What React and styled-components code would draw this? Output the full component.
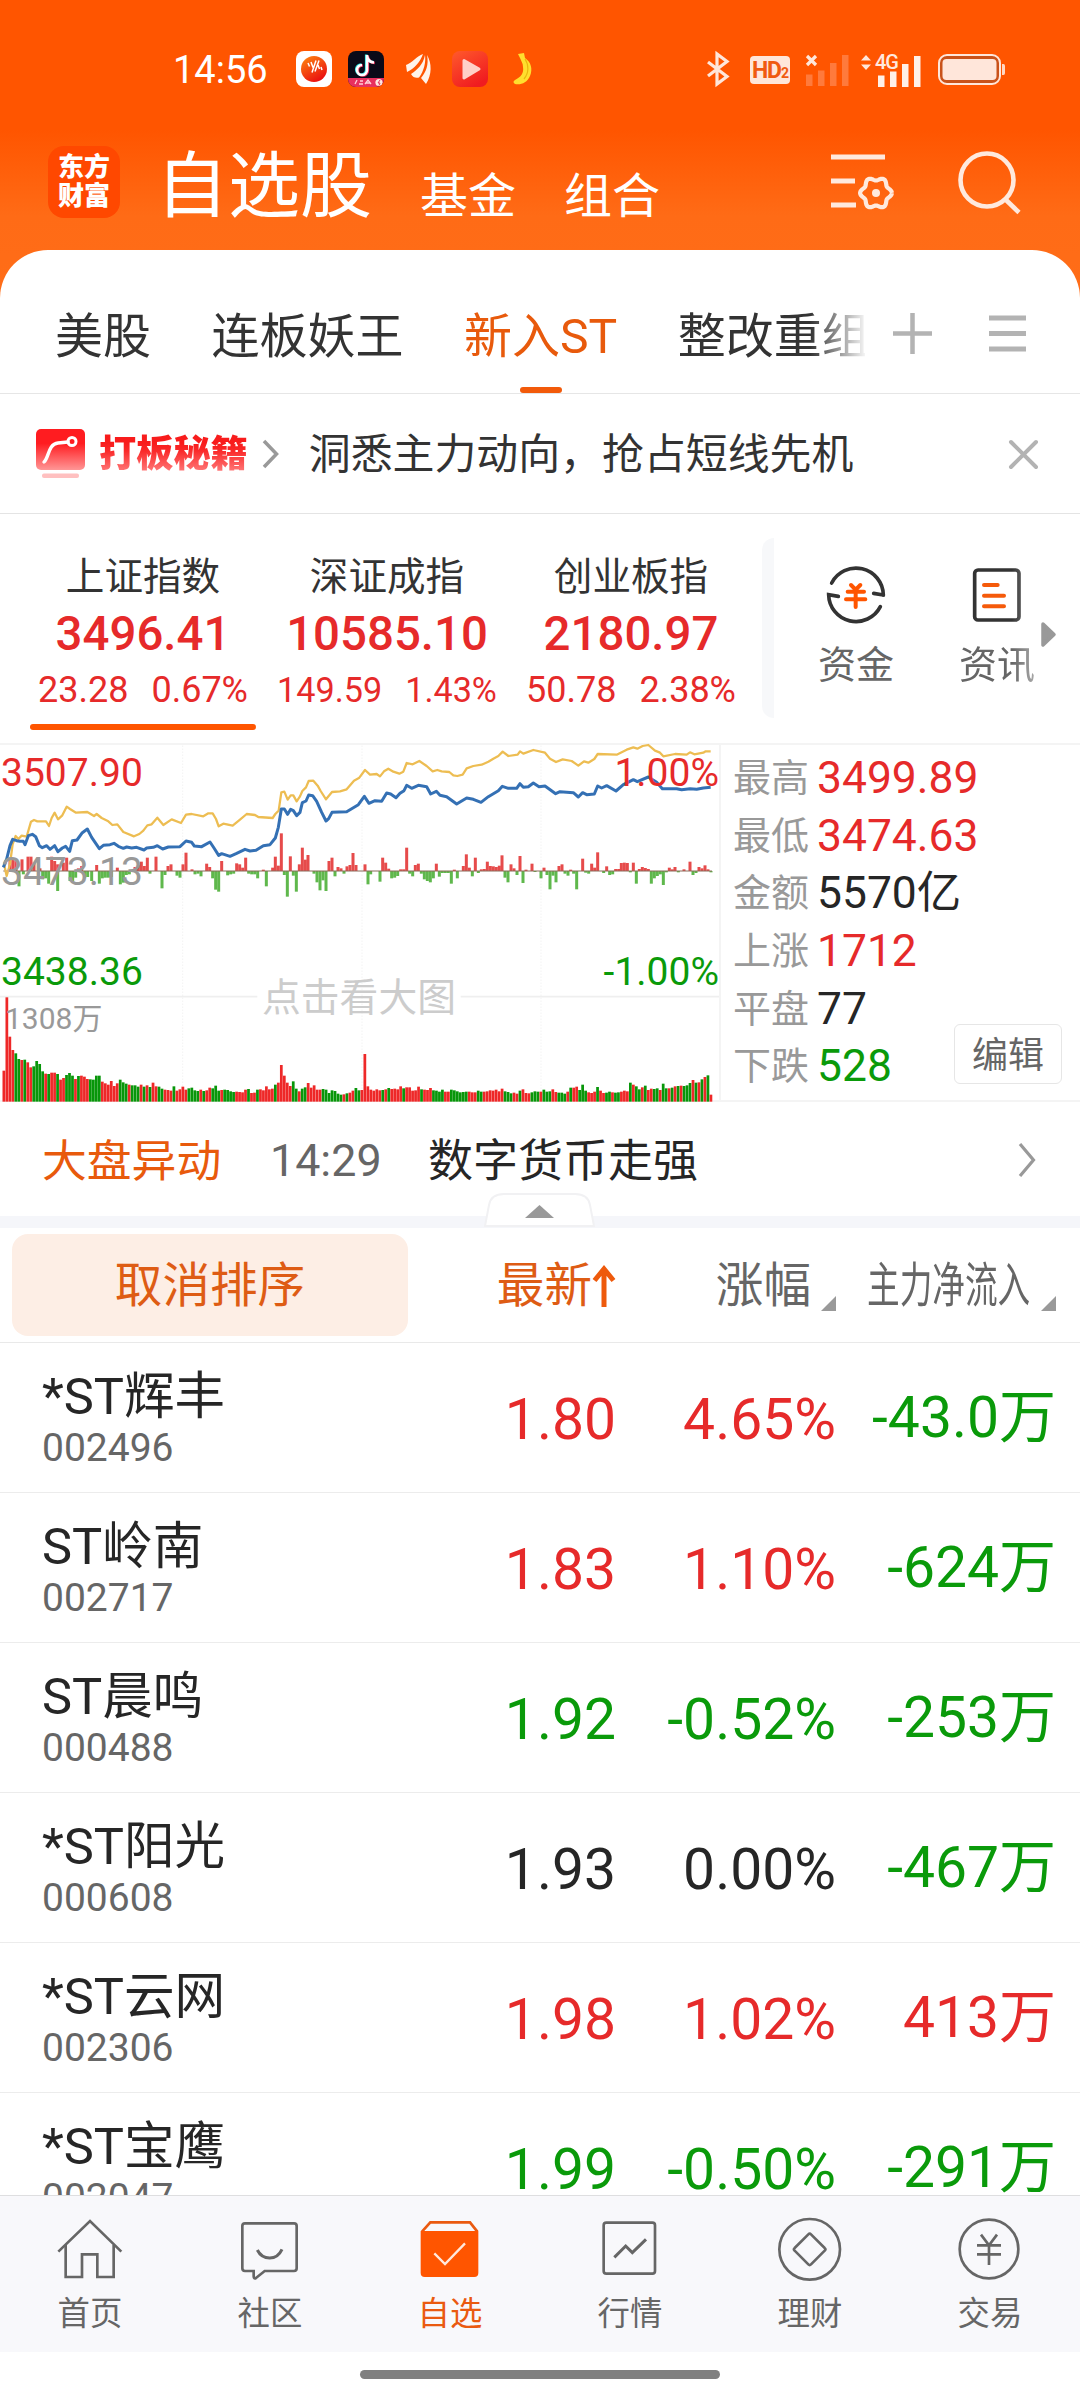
import React from "react";
import styled, { createGlobalStyle } from "styled-components";

const FONT = `Roboto, "Noto Sans CJK SC", sans-serif`;
const C = {
  red: "#e62a2a",
  green: "#0a9a0a",
  ink: "#262626",
  text: "#333",
  sub: "#666",
  mute: "#999",
  accent: "#e85a0c",
  orange: "#ff5500",
};
const TONE = { up: C.red, down: C.green, flat: C.ink };

const Global = createGlobalStyle`
  * { box-sizing: border-box; }
  body { margin: 0; background: #fff; font-family: ${FONT}; }
  svg { display: block; flex: none; overflow: visible; }
`;

const Page = styled.div`
  width: 1080px;
  height: 2400px;
  display: flex;
  flex-direction: column;
  overflow: hidden;
  background: linear-gradient(#ff5500 130px, #ff6b16 216px, #ff6d18 300px);
`;

/* ---------- status bar ---------- */
const StatusBar = styled.div`
  height: 138px;
  display: flex;
  align-items: center;
  justify-content: space-between;
  padding: 0 75px 0 173px;
  color: #fff;
`;
const StatusGroup = styled.div`
  display: flex;
  align-items: center;
  gap: ${(p) => p.$gap}px;
`;
const Clock = styled.span`
  font-size: 38px;
  line-height: 40px;
  width: 107px;
  padding-top: 1px;
`;
const AppTray = styled.div`
  display: grid;
  grid-template-columns: 52px 58px 46px 60px 22px;
  align-items: center;
`;
const HdBadge = styled.span`
  width: 40px;
  height: 28px;
  margin: 2px -1px 0 1px;
  border-radius: 4px;
  background: #ffe6da;
  color: #f05a10;
  display: flex;
  align-items: baseline;
  justify-content: center;
  font-size: 23px;
  line-height: 29px;
  font-weight: 700;
  letter-spacing: -1px;
  small { font-size: 14px; }
`;
const Signal4G = styled.div`
  display: flex;
  position: relative;
  width: 60px;
  height: 32px;
  margin-left: -5px;
  span {
    position: absolute;
    left: 14px;
    top: -1px;
    font-size: 20px;
    line-height: 20px;
    letter-spacing: -1px;
    font-weight: 500;
    color: #ffe9df;
  }
`;

/* ---------- top bar ---------- */
const TopBar = styled.header`
  height: 112px;
  display: flex;
  align-items: center;
  padding: 0 60px 24px 48px;
  color: #fff;
`;
const Logo = styled.div`
  width: 72px;
  height: 72px;
  border-radius: 16px;
  background: #ff4800;
  display: flex;
  flex-direction: column;
  align-items: center;
  justify-content: center;
  font-size: 26px;
  line-height: 29px;
  font-weight: 900;
`;
const Sections = styled.nav`
  display: flex;
  align-items: flex-end;
  gap: 48px;
  margin: 9px 0 0 36px;
  flex: 1;
`;
const Section = styled.span`
  font-size: ${(p) => (p.$active ? 72 : 48)}px;
  line-height: ${(p) => (p.$active ? 84 : 56)}px;
  padding-bottom: ${(p) => (p.$active ? 0 : 4)}px;
`;
const TopActions = styled.div`
  display: flex;
  align-items: center;
  gap: 65px;
`;

/* ---------- sheet and tabs ---------- */
const Sheet = styled.main`
  flex: 1;
  min-height: 0;
  display: flex;
  flex-direction: column;
  background: #fff;
  border-radius: 48px 48px 0 0;
  overflow: hidden;
`;
const TabRow = styled.div`
  height: 144px;
  flex: none;
  display: flex;
  border-bottom: 1px solid #e6e6e6;
`;
const TabStrip = styled.div`
  width: 865px;
  padding-left: 55px;
  display: flex;
  gap: 60.5px;
  overflow: hidden;
  mask-image: linear-gradient(90deg, #000 810px, transparent 868px);
`;
const Tab = styled.div`
  flex: none;
  display: flex;
  flex-direction: column;
  align-items: center;
  justify-content: flex-end;
  font-size: 48px;
  line-height: 60px;
  white-space: nowrap;
  color: ${(p) => (p.$active ? C.accent : C.text)};
  &::after {
    content: "";
    width: 42px;
    height: 6px;
    margin-top: 20px;
    border-radius: 3px;
    background: ${(p) => (p.$active ? "#f25a0a" : "transparent")};
  }
`;
const TabTools = styled.div`
  display: flex;
  gap: 57px;
  padding: 63px 0 0 28px;
`;

/* ---------- promo ---------- */
const Promo = styled.div`
  height: 120px;
  flex: none;
  display: flex;
  align-items: center;
  padding: 0 42px 0 36px;
  border-bottom: 1px solid #e4e4e4;
`;
const PromoBrand = styled.span`
  margin: 0 14px 0 14px;
  font-size: 37.2px;
  line-height: 50px;
  font-weight: 900;
  background: linear-gradient(#f81c1c 14px, #fa2a2a 22px, #ff7d7d 44px);
  background-clip: text;
  color: transparent;
`;
const PromoText = styled.span`
  flex: 1;
  margin: 2px 0 0 30px;
  font-size: 41.9px;
  line-height: 56px;
  color: ${C.text};
`;

/* ---------- indices ---------- */
const IndexStrip = styled.section`
  height: 229px;
  flex: none;
  display: flex;
  padding-left: 30px;
`;
const IndexItem = styled.div`
  width: 226px;
  margin-right: 18px;
  padding-top: 40px;
  display: flex;
  flex-direction: column;
  align-items: center;
  &::after {
    content: "";
    width: 226px;
    height: 6px;
    margin-top: 12px;
    border-radius: 3px;
    background: ${(p) => (p.$active ? C.orange : "transparent")};
  }
`;
const IndexName = styled.span`
  font-size: 38.6px;
  line-height: 46px;
  color: ${C.text};
`;
const IndexValue = styled.span`
  margin-top: 4px;
  font-size: 47.4px;
  line-height: 60px;
  font-weight: 500;
  color: ${C.red};
`;
const IndexChange = styled.span`
  display: flex;
  gap: 23px;
  margin-top: 4px;
  font-size: ${(p) => (p.$tight ? 34.2 : 36)}px;
  line-height: 44px;
  white-space: nowrap;
  color: ${C.red};
`;
const StripDivider = styled.i`
  width: 12px;
  height: 180px;
  margin-top: 24px;
  border-radius: 12px 0 0 12px;
  background: #f7f8fa;
`;
const QuickLinks = styled.div`
  flex: 1;
  display: flex;
  padding: 51px 0 0 37px;
`;
const QuickLink = styled.div`
  width: 90px;
  margin-right: 51px;
  display: flex;
  flex-direction: column;
  align-items: center;
  gap: 15px;
  font-size: 38px;
  line-height: 50px;
  color: ${C.sub};
  mask-image: ${(p) => (p.$fade ? "linear-gradient(90deg, #000 60px, rgba(0,0,0,.45) 88px)" : "none")};
`;
const MoreArrow = styled.div`
  margin: 57px 0 0 -52px;
`;

/* ---------- chart ---------- */
const Market = styled.section`
  height: 359px;
  flex: none;
  display: flex;
  position: relative;
  border-top: 2px solid #f4f4f4;
  border-bottom: 2px solid #f4f4f4;
`;
const ChartBox = styled.div`
  position: relative;
  width: 721px;
  border-right: 2px solid #f4f4f4;
`;
const ChartLabel = styled.span`
  position: absolute;
  top: ${(p) => p.$top}px;
  ${(p) => (p.$right ? "right: 0;" : `left: ${p.$left ?? 1}px;`)}
  font-size: ${(p) => p.$size ?? 39}px;
  line-height: 40px;
  color: ${(p) => p.$color};
`;
const Stats = styled.dl`
  flex: 1;
  margin: 0;
  padding: 5px 0 0 12px;
`;
const Stat = styled.div`
  height: 57.6px;
  display: flex;
  align-items: center;
  gap: 8px;
  dt { font-size: 38px; line-height: 57px; color: ${C.mute}; }
  dd { margin: 0; font-size: 44.4px; line-height: 57px; color: ${(p) => TONE[p.$tone]}; }
`;
const EditButton = styled.button`
  position: absolute;
  right: 18px;
  top: 279px;
  width: 108px;
  height: 60px;
  padding: 4px 0 0;
  border: 1px solid #e6e6e6;
  border-radius: 6px;
  background: #fff;
  font: 36px/54px ${FONT};
  color: ${C.sub};
`;

/* ---------- movers ---------- */
const Movers = styled.section`
  height: 126px;
  flex: none;
  position: relative;
  display: flex;
  align-items: center;
  padding: 3px 43px 0 42px;
  border-bottom: 12px solid #f5f6fa;
  font-size: 44.8px;
  line-height: 60px;
`;
const MoversTitle = styled.span`
  width: 228px;
  padding-top: 2px;
  color: ${C.accent};
`;
const MoversTime = styled.span`
  width: 158px;
  color: ${C.sub};
`;
const MoversText = styled.span`
  flex: 1;
  padding-top: 2px;
  font-size: 45px;
  color: ${C.ink};
`;
const Handle = styled.div`
  position: absolute;
  left: 484px;
  top: 91px;
`;

/* ---------- table ---------- */
const TableHead = styled.div`
  height: 115px;
  flex: none;
  display: grid;
  grid-template-columns: 396px 207px 221px 220px;
  padding-left: 12px;
  align-items: center;
  border-bottom: 1px solid #e9e9e9;
  font-size: 47.6px;
  line-height: 60px;
`;
const ClearSort = styled.div`
  height: 102px;
  padding-top: 1px;
  border-radius: 16px;
  background: #fdeee5;
  color: #de5c14;
  text-align: center;
  line-height: 102px;
`;
const HeadCell = styled.div`
  display: flex;
  justify-content: flex-end;
  align-items: center;
  padding-top: 1px;
  gap: ${(p) => (p.$sorted ? 1 : 10)}px;
  white-space: nowrap;
  color: ${(p) => (p.$sorted ? "#de5c14" : C.sub)};
`;
const Narrow = styled.span`
  width: 164px;
  > span {
    display: inline-block;
    transform: scaleX(0.686);
    transform-origin: left;
  }
`;
const SortMark = styled.svg`
  margin-top: 35px;
`;
const List = styled.div`
  flex: 1;
  min-height: 0;
  overflow: hidden;
`;
const Row = styled.div`
  height: 150px;
  display: grid;
  grid-template-columns: 240px 334px 220px 220px;
  padding-left: 42px;
  border-bottom: 1px solid #ececec;
`;
const Stock = styled.div`
  padding-top: 24px;
  display: flex;
  flex-direction: column;
`;
const StockName = styled.span`
  font-size: 50.6px;
  line-height: 60px;
  white-space: nowrap;
  color: ${C.ink};
`;
const StockCode = styled.span`
  margin-top: 1px;
  font-size: 39px;
  line-height: 40px;
  color: ${C.sub};
`;
const Num = styled.span`
  font-size: 57px;
  line-height: 154px;
  text-align: right;
  white-space: nowrap;
  color: ${(p) => TONE[p.$tone]};
`;
const Flow = styled(Num)`
  font-size: 57px;
  line-height: 150px;
`;

/* ---------- bottom nav ---------- */
const BottomNav = styled.nav`
  height: 157px;
  flex: none;
  display: flex;
  background: #f8f8fb;
  border-top: 1px solid #dedee0;
`;
const NavItem = styled.div`
  flex: 1;
  padding-top: 21px;
  display: flex;
  flex-direction: column;
  align-items: center;
  gap: 13px;
  font-size: 32.4px;
  line-height: 40px;
  color: ${(p) => (p.$active ? "#ea5a10" : C.sub)};
`;
const HomeArea = styled.div`
  height: 48px;
  flex: none;
  padding-top: 18px;
  background: #fff;
  &::after {
    content: "";
    display: block;
    width: 360px;
    height: 9px;
    margin: 0 auto;
    border-radius: 5px;
    background: #808080;
  }
`;

/* ---------- chart data ---------- */
const BLUE =
  "10,410 20,385 30,345 38,326 50,330 60,332 70,332 75,342 85,315 97,311 107,318 118,345 127,351 140,345 150,356 164,345 174,363 187,352 197,347 209,362 217,330 231,328 247,306 262,295 275,320 298,354 310,344 330,342 342,338 355,347 370,353 380,349 395,352 410,350 432,358 440,352 460,350 472,345 488,355 505,349 540,348 558,331 575,335 583,346 605,348 630,334 642,352 656,374 665,369 690,377 710,368 735,356 750,361 768,359 790,345 810,342 826,322 835,290 844,235 853,235 863,251 872,236 880,240 890,255 900,245 907,216 918,211 926,193 938,195 950,212 965,245 978,271 986,264 996,245 1040,243 1055,234 1075,222 1093,197 1107,218 1125,210 1145,212 1160,187 1172,190 1188,201 1200,188 1212,180 1220,164 1235,173 1255,164 1280,168 1292,190 1309,182 1320,194 1340,198 1370,220 1400,202 1420,206 1443,215 1465,198 1495,180 1507,167 1525,173 1550,173 1560,159 1570,170 1585,168 1600,157 1617,168 1635,166 1667,189 1680,183 1720,186 1735,199 1748,186 1760,192 1783,190 1793,166 1805,172 1820,165 1848,181 1870,162 1900,147 1912,153 1945,139 1970,155 1987,174 2030,174 2045,177 2070,174 2090,176 2110,172 2132,170";
const YELLOW =
  "12,400 20,436 30,400 38,340 47,316 55,325 65,315 80,318 93,273 102,268 112,272 138,272 147,286 155,262 164,246 174,266 187,254 200,228 210,235 228,246 262,244 282,256 290,250 305,262 325,272 337,283 352,281 370,304 402,317 418,310 430,300 442,284 455,281 472,261 490,283 515,266 543,277 558,252 575,250 610,257 625,248 638,248 648,265 656,287 670,279 698,285 720,267 740,250 765,253 775,259 818,262 826,250 836,240 844,185 853,183 863,207 872,194 880,194 890,212 900,197 907,181 918,170 926,151 940,150 953,165 962,181 978,206 996,184 1020,182 1040,176 1062,150 1078,141 1095,118 1110,132 1130,130 1140,137 1152,122 1165,114 1180,123 1198,129 1210,123 1220,97 1238,101 1258,91 1280,106 1298,122 1312,118 1325,122 1348,124 1360,134 1372,136 1388,132 1400,113 1420,106 1445,102 1465,93 1480,84 1495,76 1508,63 1525,76 1553,72 1560,62 1570,69 1600,58 1635,66 1650,84 1668,94 1688,86 1715,91 1735,105 1752,92 1765,96 1783,85 1793,70 1850,72 1880,57 1900,50 1912,54 1928,46 1945,43 1965,60 1980,66 1990,77 2025,70 2060,72 2070,65 2083,71 2110,66 2117,62 2132,62";
const RISE =
  "30,40 39,35 48,30 66,35 84,43 93,43 102,25 120,8 155,43 164,30 173,20 190,25 200,40 235,8 245,15 290,18 352,10 405,12 415,18 424,28 433,15 442,40 468,43 504,15 513,20 549,20 558,55 576,5 620,22 629,12 665,30 710,23 719,20 728,10 737,40 790,4 818,10 826,43 835,16 844,113 871,44 898,20 907,70 916,34 924,48 987,30 996,40 1014,12 1023,8 1041,14 1050,18 1059,54 1068,18 1095,20 1148,40 1157,25 1166,7 1202,5 1211,5 1220,70 1246,18 1255,22 1309,22 1363,4 1390,15 1399,50 1408,10 1426,40 1444,5 1453,6 1462,28 1471,15 1480,14 1489,12 1498,16 1506,47 1533,20 1542,8 1560,45 1578,4 1596,22 1632,10 1677,15 1686,20 1712,4 1748,37 1775,22 1784,10 1793,56 1820,14 1847,6 1856,6 1864,24 1873,25 1882,24 1900,25 1918,6 1927,12 1936,9 1945,6 2008,10 2017,5 2025,12 2052,5 2070,28 2097,12 2106,8 2115,17 2124,5";
const FALL =
  "57,46 70,10 128,25 137,22 146,38 173,60 210,30 218,30 227,20 254,20 263,18 275,30 298,38 307,22 316,20 325,20 334,18 361,40 370,35 379,12 388,10 450,8 486,52 495,12 531,14 540,20 585,10 594,8 603,16 638,22 647,56 656,62 683,13 692,10 701,8 746,8 755,10 764,10 773,22 799,46 853,12 862,77 880,14 889,62 942,8 951,34 960,58 969,28 978,60 1005,16 1032,8 1104,40 1112,10 1140,32 1175,22 1184,20 1193,15 1229,8 1238,16 1264,8 1273,25 1282,30 1291,34 1300,22 1318,17 1327,6 1336,6 1345,6 1354,38 1372,22 1417,16 1435,6 1515,20 1524,34 1551,12 1569,36 1605,3 1623,22 1641,12 1650,55 1659,14 1668,34 1695,8 1704,14 1721,8 1730,55 1757,5 1766,8 1811,6 1829,12 1838,10 1891,4 1909,38 1954,38 1963,22 1972,15 1981,10 1990,42 1999,4 2035,4 2079,12 2088,6 2133,4";
const VOLUME = [
  1020, 800, 918, 958, 968, 985, 988, 987, 995, 1010, 1007, 991, 1000, 1022, 1029, 1030, 1026, 1026, 1030, 1047,
  1042, 1033, 1027, 1035, 1045, 1036, 1035, 1038, 1045, 1046, 1047, 1035, 1035, 1053, 1058, 1062, 1051, 1066, 1058, 1047,
  1055, 1059, 1062, 1064, 1064, 1068, 1062, 1068, 1064, 1069, 1056, 1067, 1068, 1074, 1077, 1078, 1080, 1067, 1080, 1076,
  1068, 1077, 1073, 1071, 1079, 1081, 1077, 1081, 1079, 1071, 1073, 1065, 1080, 1078, 1077, 1078, 1082, 1084, 1083, 1084,
  1085, 1077, 1075, 1087, 1086, 1077, 1076, 1079, 1067, 1076, 1074, 1062, 1056, 1003, 1035, 1056, 1066, 1052, 1074, 1082,
  1074, 1070, 1057, 1071, 1064, 1077, 1077, 1075, 1077, 1087, 1079, 1081, 1089, 1092, 1091, 1088, 1086, 1080, 1072, 1079,
  1078, 970, 1067, 1077, 1080, 1076, 1079, 1078, 1076, 1072, 1075, 1074, 1076, 1067, 1073, 1070, 1070, 1080, 1079, 1068,
  1076, 1077, 1078, 1072, 1079, 1080, 1083, 1077, 1083, 1083, 1077, 1079, 1082, 1085, 1084, 1083, 1083, 1085, 1085, 1080,
  1083, 1083, 1082, 1079, 1080, 1077, 1082, 1074, 1082, 1084, 1088, 1086, 1089, 1080, 1076, 1087, 1088, 1085, 1082, 1083,
  1083, 1077, 1083, 1082, 1076, 1084, 1086, 1086, 1089, 1083, 1071, 1071, 1068, 1078, 1062, 1080, 1085, 1087, 1083, 1069,
  1080, 1087, 1086, 1083, 1085, 1086, 1085, 1083, 1080, 1082, 1056, 1062, 1067, 1076, 1070, 1065, 1078, 1074, 1075, 1073,
  1078, 1059, 1073, 1073, 1071, 1067, 1066, 1065, 1066, 1064, 1057, 1048, 1056, 1055, 1046, 1039, 1034, 1092,
];
const VOLUME_SIDE =
  "RRRRGGRGRRGGGGRGRRGRRGGGRGRRRGGGGRRRRRRGGGRGGGRGRGR" +
  "RGGRRRGRRRRGGGGRGRRGGGRGGGGRRRRGRRGRRRRRGRRRRRGGRGG" +
  "RRRRRGGGGGGGRGRRGGRRRRRRRGRGRRRRGRRRRRGRRRGGGGRRGGG" +
  "GGGRRRGGRRRRRRRGGGRRGRRRGGGRGGGRRGGGRGRRGGGRRRGRRGG" +
  "RGGRRRGRGGRGRRGGRGGRGRGRGGGRGRGRGRGR";

const pairs = (s) => s.split(" ").map((p) => p.split(",").map(Number));

function IndexChart() {
  return (
    <svg width="719" height="359" viewBox="0 43 2157 1077" preserveAspectRatio="none">
      <g stroke="#ededed" strokeWidth="3" strokeDasharray="3 6">
        <path d="M548 45V1113M1086 45V1113M1623 45V1113" />
      </g>
      <path d="M0 798H772M1382 798H2157" stroke="#efefef" strokeWidth="5" />
      <g fill="#e64b4b">
        {pairs(RISE).map(([x, h]) => (
          <rect key={x} x={x - 4.5} y={421 - h} width="9" height={h} />
        ))}
      </g>
      <g fill="#5fb84c">
        {pairs(FALL).map(([x, h]) => (
          <rect key={x} x={x - 4.5} y={421} width="9" height={h} />
        ))}
      </g>
      <path d="M10 421H2136" stroke="#8a6a5a" strokeWidth="3" />
      <polyline points={YELLOW} fill="none" stroke="#edbd52" strokeWidth="6.8" strokeLinejoin="round" />
      <polyline points={BLUE} fill="none" stroke="#3470b4" strokeWidth="9" strokeLinejoin="round" />
      {VOLUME.map((y, i) => (
        <rect
          key={i}
          x={7.5 + i * 8.95}
          y={y}
          width="8.2"
          height={1113 - y}
          fill={VOLUME_SIDE[i] === "G" ? "#08960a" : "#ee2828"}
        />
      ))}
    </svg>
  );
}

/* ---------- icons ---------- */
const NAV_ICONS = {
  home: (
    <>
      <path d="M-95 8L0 -84L94 8" />
      <path d="M-73 -12V84H-24V16H22V84H71V-12" />
    </>
  ),
  community: (
    <>
      <path d="M-75 -77H72Q80 -77 80 -69V58Q80 66 72 66H-16L-42 87Q-49 91 -49 82V66H-75Q-83 66 -83 58V-69Q-83 -77 -75 -77Z" />
      <path d="M-38 3Q-26 27 -1 27Q24 27 36 1" strokeWidth="9" />
    </>
  ),
  watch: (
    <>
      <path d="M-84 -52L-59 -80H60L82 -52" stroke="#ea5a10" fill="#f8f8fb" />
      <path d="M-88 -54H85V72Q85 84 73 84H-76Q-88 84 -88 72Z" fill="#ff5500" stroke="none" />
      <path d="M-47 13L-15 45L45 -17" stroke="#ffe8dc" strokeWidth="7" />
    </>
  ),
  quotes: (
    <>
      <rect x="-79" y="-79" width="154" height="153" rx="8" />
      <path d="M-47 25L-13 -9L7 11L48 -29" strokeWidth="9" />
    </>
  ),
  wealth: (
    <>
      <circle cx="-1" cy="1" r="91" />
      <path d="M-5 -44Q-1 -48 3 -44L44 -3Q49 1 44 5L3 46Q-1 50 -5 46L-46 5Q-51 1 -46 -3Z" />
    </>
  ),
  trade: (
    <>
      <circle cx="-3" cy="0" r="88" />
      <path d="M-27 -43L-3 -11L21 -43M-39 -11H33M-39 16H33M-3 -11V48" />
    </>
  ),
};

const NavIcon = ({ name }) => (
  <svg width="64" height="64" viewBox="-96 -96 192 192" fill="none" stroke="#666" strokeWidth="8">
    {NAV_ICONS[name]}
  </svg>
);

const gear = Array.from({ length: 73 }, (_, i) => {
  const t = (i * Math.PI) / 36;
  const r = 14.2 + 1.7 * Math.cos(6 * t);
  return `${(45 + r * Math.cos(t)).toFixed(2)},${(39 + r * Math.sin(t)).toFixed(2)}`;
}).join(" ");

const FilterIcon = () => (
  <svg width="62" height="58" viewBox="0 -1 62 58" fill="none" stroke="#ffe9dd" strokeWidth="5">
    <path d="M0 3H54M0 27H24M0 51H25" />
    <polyline points={gear} strokeWidth="4.2" strokeLinejoin="round" />
    <circle cx="45" cy="39" r="4" fill="#ffe9dd" stroke="none" />
  </svg>
);

const SearchIcon = () => (
  <svg width="62" height="62" viewBox="0 0 62 62" fill="none" stroke="#ffe9dd" strokeWidth="4.6">
    <circle cx="29" cy="29" r="26.5" />
    <path d="M47 48L61 61.5" />
  </svg>
);

const AppIcons = () => (
  <AppTray>
    <svg width="36" height="36" viewBox="0 0 36 36">
      <defs>
        <linearGradient id="sun" x1="0" y1="0" x2="0.6" y2="1">
          <stop offset="0" stopColor="#ff8a10" />
          <stop offset="1" stopColor="#ea1010" />
        </linearGradient>
      </defs>
      <rect width="36" height="36" rx="8" fill="#fff" />
      <circle cx="18" cy="18" r="13" fill="url(#sun)" />
      <path d="M12 12l1.500 3.500M15 11l2 5.500M20 9.500l-4 12M23 9.500l-4 11M22 14l1.500 4M25 16l1 3" stroke="#fff" strokeWidth="1.500" />
    </svg>
    <svg width="36" height="36" viewBox="0 0 36 36">
      <defs>
        <clipPath id="tile"><rect width="36" height="36" rx="8" /></clipPath>
      </defs>
      <g clipPath="url(#tile)" fill="none" strokeWidth="2.600">
        <rect width="36" height="36" fill="#0b0a18" />
        <path d="M19 4v15a5 5 0 1 1-5-5M19 5q1 6 7 6.500" stroke="#25e5e0" transform="translate(-.8 -.5)" />
        <path d="M19 4v15a5 5 0 1 1-5-5M19 5q1 6 7 6.500" stroke="#f0305c" transform="translate(.8 .5)" />
        <path d="M19 4v15a5 5 0 1 1-5-5M19 5q1 6 7 6.500" stroke="#fff" />
        <rect y="27" width="36" height="9" fill="#e8305e" />
        <path d="M7 33l2-4M11 33h4M12 30h3M17 33l3-4 3 4M18 32h4" stroke="#ffd0d8" strokeWidth="1.300" />
        <circle cx="31" cy="31.500" r="3.600" fill="#ffe8e0" />
        <path d="M32 29l-2 3h2l-1 2.500" stroke="#e8305e" strokeWidth="1" />
      </g>
    </svg>
    <svg width="26" height="30" viewBox="0 0 26 30" fill="#fff3ea">
      <path d="M17 0C11 2 6 9 0 11L1 18C9 14 14 8 17 0Z" />
      <path d="M19 1C17 11 11 16 5 20Q8 25 13 23.500C18 17 20 8 19 1Z" />
      <path d="M21 1C23 11 20 18 15 24L20 30C26 21 26 9 21 1Z" />
    </svg>
    <svg width="36" height="36" viewBox="0 0 36 36">
      <defs>
        <linearGradient id="play" x1="0" y1="0" x2="0.6" y2="1">
          <stop offset="0" stopColor="#ff5a2c" />
          <stop offset="1" stopColor="#f01c20" />
        </linearGradient>
      </defs>
      <rect width="36" height="36" rx="8" fill="url(#play)" />
      <path d="M12 9.500L27 18L12 27Z" fill="#ffd0c8" stroke="#ffd0c8" strokeWidth="3" strokeLinejoin="round" />
    </svg>
    <svg width="22" height="34" viewBox="0 0 22 34">
      <path d="M6 2l6-1 1 5c6 4 8 11 5 18-3 7-9 9-15 8-2-1-2-3 0-4 6-3 9-7 8-13 0-4-2-6-3-9z" fill="#ffdf2e" />
      <path d="M13 7c4 6 4 14-1 20" stroke="#e8b80e" strokeWidth="1.200" fill="none" />
    </svg>
  </AppTray>
);

const Bars = ({ x, color }) => (
  <path
    d={`M${x} 22.500h6.500v11.500h-6.500zM${x + 12} 18.500h6.500v15.500h-6.500zM${x + 24} 11h6.500v23h-6.500zM${x + 36} 3h6.500v31h-6.500z`}
    fill={color}
  />
);

const STOCKS = [
  ["*ST辉丰", "002496", "1.80", "4.65%", "up", "-43.0万", "down"],
  ["ST岭南", "002717", "1.83", "1.10%", "up", "-624万", "down"],
  ["ST晨鸣", "000488", "1.92", "-0.52%", "down", "-253万", "down"],
  ["*ST阳光", "000608", "1.93", "0.00%", "flat", "-467万", "down"],
  ["*ST云网", "002306", "1.98", "1.02%", "up", "413万", "up"],
  ["*ST宝鹰", "002047", "1.99", "-0.50%", "down", "-291万", "down"],
];
const INDICES = [
  ["上证指数", "3496.41", "23.28", "0.67%"],
  ["深证成指", "10585.10", "149.59", "1.43%"],
  ["创业板指", "2180.97", "50.78", "2.38%"],
];
const STATS = [
  ["最高", "3499.89", "up"],
  ["最低", "3474.63", "up"],
  ["金额", "5570亿", "flat"],
  ["上涨", "1712", "up"],
  ["平盘", "77", "flat"],
  ["下跌", "528", "down"],
];
const NAV = [
  ["首页", "home"],
  ["社区", "community"],
  ["自选", "watch"],
  ["行情", "quotes"],
  ["理财", "wealth"],
  ["交易", "trade"],
];

const Corner = () => (
  <SortMark width="15" height="15" viewBox="0 0 15 15">
    <path d="M15 0V15H0Z" fill="#999" />
  </SortMark>
);

export default function App() {
  return (
    <Page>
      <Global />
      <StatusBar>
        <StatusGroup $gap={16}>
          <Clock>14:56</Clock>
          <AppIcons />
        </StatusGroup>
        <StatusGroup $gap={17}>
          <svg width="24" height="34" viewBox="0 0 24 34" fill="none" stroke="#ffe6da" strokeWidth="3.200">
            <path d="M0 10L19 24.500L9 32V2L19 9.500L0 24" />
          </svg>
          <HdBadge>HD<small>2</small></HdBadge>
          <svg width="43" height="34" viewBox="0 0 43 34">
            <Bars x={0} color="#ff7a3c" />
            <path d="M1 4l9 9M10 4l-9 9" stroke="#ffe6da" strokeWidth="3.200" />
          </svg>
          <Signal4G>
            <svg width="60" height="34" viewBox="0 0 60 34">
              <Bars x={17} color="#fff0e8" />
              <path d="M0 7.500L5 2L10 7.500zM0 11.500L5 17L10 11.500z" fill="#ffe6da" />
              <path d="M13 0H36V17H13z" fill="#ff5500" />
            </svg>
            <span>4G</span>
          </Signal4G>
          <svg width="67" height="31" viewBox="0 0 67 31">
            <rect x="1" y="1" width="61" height="29" rx="8" fill="#c9521a" stroke="#ffe6da" strokeWidth="2" />
            <rect x="4.500" y="5" width="54" height="21" rx="4" fill="#ffe6da" />
            <path d="M64 10h1.500q1.500 0 1.500 2v7q0 2-1.500 2H64z" fill="#ffd8c4" />
          </svg>
        </StatusGroup>
      </StatusBar>

      <TopBar>
        <Logo>
          <span>东方</span>
          <span>财富</span>
        </Logo>
        <Sections>
          <Section $active>自选股</Section>
          <Section>基金</Section>
          <Section>组合</Section>
        </Sections>
        <TopActions>
          <FilterIcon />
          <SearchIcon />
        </TopActions>
      </TopBar>

      <Sheet>
        <TabRow>
          <TabStrip>
            <Tab>美股</Tab>
            <Tab>连板妖王</Tab>
            <Tab $active>新入ST</Tab>
            <Tab>整改重组</Tab>
          </TabStrip>
          <TabTools>
            <svg width="39" height="39" viewBox="0 0 39 39" stroke="#b3b3b3" strokeWidth="4.500">
              <path d="M0 20.500H39M19.500 0V41" />
            </svg>
            <svg width="37" height="39" viewBox="0 0 37 39" stroke="#b3b3b3" strokeWidth="5">
              <path d="M0 5H37M0 20.500H37M0 36H37" />
            </svg>
          </TabTools>
        </TabRow>

        <Promo>
          <svg width="49" height="50" viewBox="0 0 49 50">
            <defs>
              <linearGradient id="brand" x1="0" y1="0" x2="0" y2="1">
                <stop offset="0.350" stopColor="#ff1c20" />
                <stop offset="1" stopColor="#ff9696" />
              </linearGradient>
            </defs>
            <rect y="0" width="49" height="41" rx="5" fill="url(#brand)" />
            <rect x="6" y="44.500" width="37" height="4.500" rx="2" fill="#ffc0c0" />
            <path d="M8 33C13 29 12 15 22 14L32 13" fill="none" stroke="#fff" strokeWidth="3.400" strokeLinecap="round" />
            <circle cx="36" cy="12.500" r="4" fill="none" stroke="#fff" strokeWidth="3" />
          </svg>
          <PromoBrand>打板秘籍</PromoBrand>
          <svg width="17" height="28" viewBox="0 0 17 28" fill="none" stroke="#999" strokeWidth="3.500">
            <path d="M2 1L14.500 14L2 27" />
          </svg>
          <PromoText>洞悉主力动向，抢占短线先机</PromoText>
          <svg width="29" height="29" viewBox="0 -1 29 29" stroke="#b3b3b3" strokeWidth="4" strokeLinecap="round">
            <path d="M2 2L27 27M27 2L2 27" />
          </svg>
        </Promo>

        <IndexStrip>
          {INDICES.map(([name, value, diff, pct], i) => (
            <IndexItem key={name} $active={i === 0}>
              <IndexName>{name}</IndexName>
              <IndexValue>{value}</IndexValue>
              <IndexChange $tight={diff.length > 5}>
                <span>{diff}</span>
                <span>{pct}</span>
              </IndexChange>
            </IndexItem>
          ))}
          <StripDivider />
          <QuickLinks>
            <QuickLink>
              <svg width="60" height="60" viewBox="258 495 180 180" fill="none" stroke="#333" strokeWidth="11" strokeLinecap="round">
                <path d="M275 549A82 82 0 0 1 430 585" />
                <path d="M430 585L401 580" />
                <path d="M421 620A82 82 0 0 1 266 584L295 589" />
                <g stroke="#ff5500" strokeWidth="12">
                  <path d="M333 555L347 569L361 555M323 575H372M318 598H376M347 570V621" />
                </g>
              </svg>
              <span>资金</span>
            </QuickLink>
            <QuickLink $fade>
              <svg width="60" height="60" viewBox="681 495 180 180" fill="none" strokeLinecap="round">
                <rect x="704" y="510" width="133" height="150" rx="10" stroke="#333" strokeWidth="11" />
                <path d="M732 555H773M732 587H792M732 619H792" stroke="#f55a0a" strokeWidth="12" />
              </svg>
              <span>资讯</span>
            </QuickLink>
            <MoreArrow>
              <svg width="15" height="25" viewBox="0 0 15 25">
                <path d="M2 2L13 12.500L2 23Z" fill="#999" stroke="#999" strokeWidth="3.500" strokeLinejoin="round" />
              </svg>
            </MoreArrow>
          </QuickLinks>
        </IndexStrip>

        <Market>
          <ChartBox>
            <IndexChart />
            <ChartLabel $top={8} $color={C.red}>3507.90</ChartLabel>
            <ChartLabel $top={8} $right $color={C.red}>1.00%</ChartLabel>
            <ChartLabel $top={107} $color={C.mute}>3473.13</ChartLabel>
            <ChartLabel $top={207} $color={C.green}>3438.36</ChartLabel>
            <ChartLabel $top={207} $right $color={C.green}>-1.00%</ChartLabel>
            <ChartLabel $top={254} $left={5} $size={30} $color={C.mute}>1308万</ChartLabel>
            <ChartLabel $top={233} $left={262} $size={38.800} $color="#ccc">点击看大图</ChartLabel>
          </ChartBox>
          <Stats>
            {STATS.map(([label, value, tone]) => (
              <Stat key={label} $tone={tone}>
                <dt>{label}</dt>
                <dd>{value}</dd>
              </Stat>
            ))}
          </Stats>
          <EditButton>编辑</EditButton>
        </Market>

        <Movers>
          <MoversTitle>大盘异动</MoversTitle>
          <MoversTime>14:29</MoversTime>
          <MoversText>数字货币走强</MoversText>
          <svg width="18" height="34" viewBox="0 1 18 34" fill="none" stroke="#999" strokeWidth="3.200">
            <path d="M1 1L14.500 17L1 33" />
          </svg>
          <Handle>
            <svg width="111" height="34" viewBox="0 0 111 34">
              <path d="M1 33L5 12Q7 1 20 1H91Q104 1 106 12L110 33Z" fill="#fff" stroke="#f1f1f3" strokeWidth="2" />
              <path d="M41 25L55.500 12L70 25Z" fill="#999" />
            </svg>
          </Handle>
        </Movers>

        <TableHead>
          <ClearSort>取消排序</ClearSort>
          <HeadCell $sorted>
            最新
            <svg width="22" height="42" viewBox="0 0 22 42" fill="none" stroke="#ee5a0c" strokeWidth="5">
              <path d="M11 42V4M1.500 15.500L11 4L20.500 15.500" />
            </svg>
          </HeadCell>
          <HeadCell>
            涨幅
            <Corner />
          </HeadCell>
          <HeadCell>
            <Narrow>
              <span>主力净流入</span>
            </Narrow>
            <Corner />
          </HeadCell>
        </TableHead>

        <List>
          {STOCKS.map(([name, code, price, pct, tone, flow, flowTone]) => (
            <Row key={code}>
              <Stock>
                <StockName>{name}</StockName>
                <StockCode>{code}</StockCode>
              </Stock>
              <Num $tone={tone}>{price}</Num>
              <Num $tone={tone}>{pct}</Num>
              <Flow $tone={flowTone}>{flow}</Flow>
            </Row>
          ))}
        </List>

        <BottomNav>
          {NAV.map(([label, icon]) => (
            <NavItem key={icon} $active={icon === "watch"}>
              <NavIcon name={icon} />
              <span>{label}</span>
            </NavItem>
          ))}
        </BottomNav>
        <HomeArea />
      </Sheet>
    </Page>
  );
}
